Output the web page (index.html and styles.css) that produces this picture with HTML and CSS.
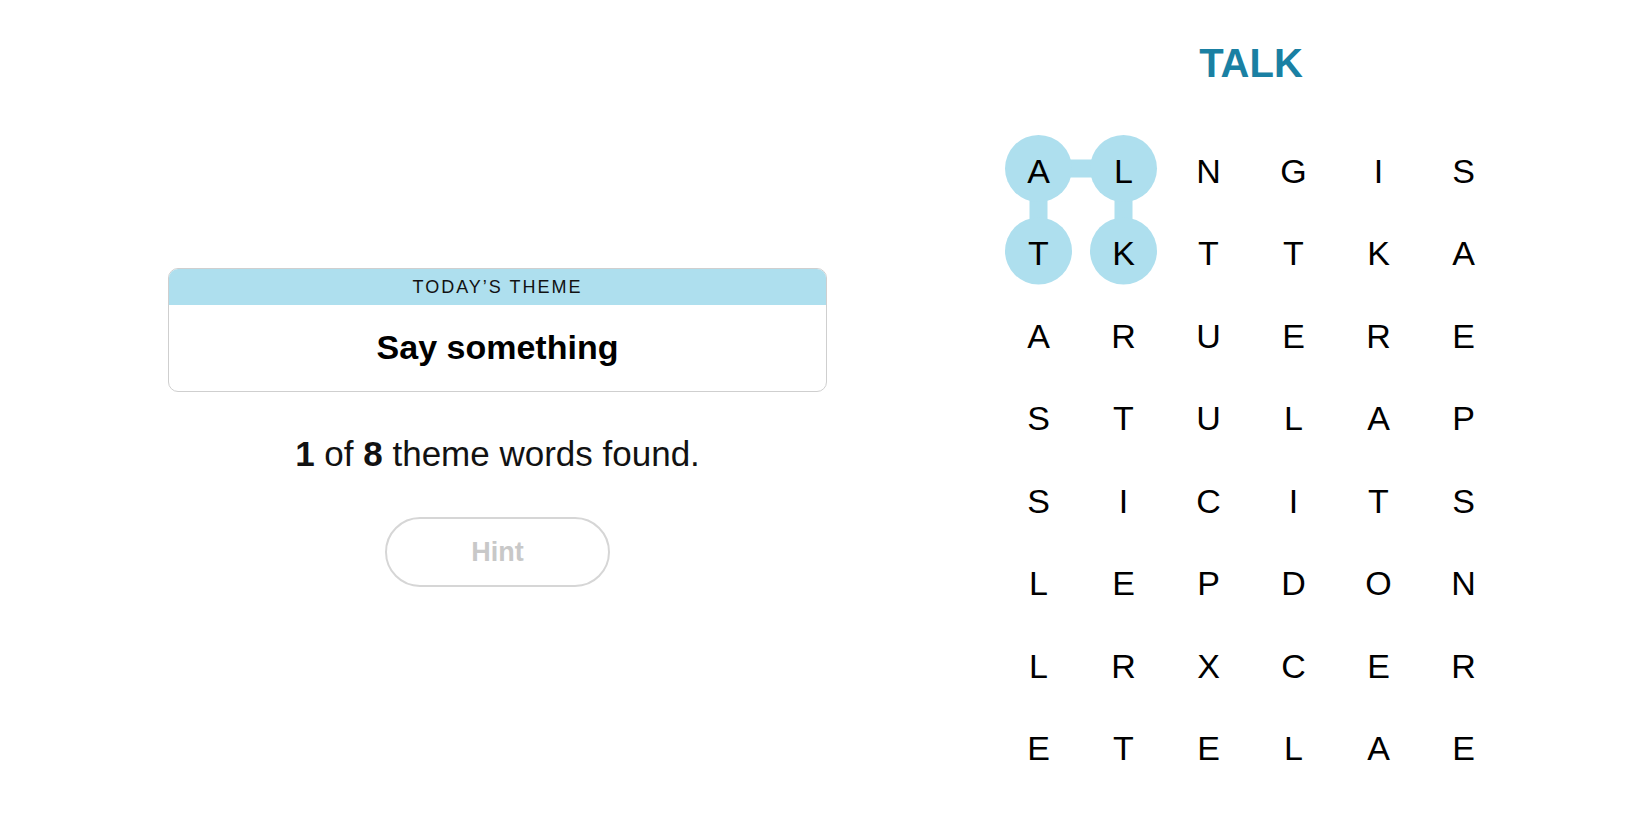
FILE: index.html
```html
<!DOCTYPE html>
<html lang="en">
<head>
<meta charset="utf-8">
<title>Strands</title>
<link rel="stylesheet" href="styles.css">
</head>
<body>
<main class="game">
  <section class="side">
    <div class="theme-card">
      <div class="theme-head">TODAY’S THEME</div>
      <div class="theme-body">Say something</div>
    </div>
    <p class="progress"><b>1</b> of <b>8</b> theme words found.</p>
    <button class="hint" disabled>Hint</button>
  </section>
  <section class="board">
    <h1 class="word">TALK</h1>
    <div class="grid">
      <svg class="trail" width="510" height="660" viewBox="0 0 510 660" aria-hidden="true">
        <g stroke="#aedfee" stroke-width="18" stroke-linecap="butt">
          <line x1="42.5" y1="39.5" x2="127.5" y2="39.5"/>
          <line x1="42.5" y1="39.5" x2="42.5" y2="122"/>
          <line x1="127.5" y1="39.5" x2="127.5" y2="122"/>
        </g>
        <g fill="#aedfee">
          <circle cx="42.5" cy="39.5" r="33.5"/>
          <circle cx="127.5" cy="39.5" r="33.5"/>
          <circle cx="42.5" cy="122" r="33.5"/>
          <circle cx="127.5" cy="122" r="33.5"/>
        </g>
      </svg>
      <span>A</span><span>L</span><span>N</span><span>G</span><span>I</span><span>S</span>
      <span>T</span><span>K</span><span>T</span><span>T</span><span>K</span><span>A</span>
      <span>A</span><span>R</span><span>U</span><span>E</span><span>R</span><span>E</span>
      <span>S</span><span>T</span><span>U</span><span>L</span><span>A</span><span>P</span>
      <span>S</span><span>I</span><span>C</span><span>I</span><span>T</span><span>S</span>
      <span>L</span><span>E</span><span>P</span><span>D</span><span>O</span><span>N</span>
      <span>L</span><span>R</span><span>X</span><span>C</span><span>E</span><span>R</span>
      <span>E</span><span>T</span><span>E</span><span>L</span><span>A</span><span>E</span>
    </div>
  </section>
</main>
</body>
</html>
```

FILE: styles.css
```css
* { box-sizing: border-box; }
html, body {
  margin: 0;
  padding: 0;
  background: #ffffff;
  color: #000000;
  font-family: "Liberation Sans", Arial, sans-serif;
}
.game {
  display: flex;
  align-items: flex-start;
  padding-left: 168px;
  height: 825px;
  overflow: hidden;
}
.side {
  width: 659px;
  padding-top: 268px;
  display: flex;
  flex-direction: column;
  align-items: center;
}
.theme-card {
  width: 659px;
  border: 1px solid #cfcfcf;
  border-radius: 10px;
  overflow: hidden;
}
.theme-head {
  background: #aedfee;
  height: 36px;
  line-height: 37px;
  text-align: center;
  font-size: 18px;
  letter-spacing: 2px;
  color: #121212;
}
.theme-body {
  height: 86px;
  line-height: 84px;
  text-align: center;
  font-size: 34px;
  font-weight: bold;
  color: #000;
}
.progress {
  margin: 43px 0 0;
  font-size: 35px;
  line-height: 38px;
  color: #121212;
}
.hint {
  margin-top: 44px;
  width: 225px;
  height: 70px;
  border: 2px solid #d6d6d6;
  border-radius: 35px;
  background: #fff;
  color: #c8c8c8;
  font-family: "Liberation Sans", Arial, sans-serif;
  font-weight: bold;
  font-size: 27px;
}
.board {
  margin-left: 169px;
  width: 510px;
}
.word {
  margin: 0;
  padding-top: 40px;
  height: 129px;
  line-height: 46px;
  text-align: center;
  font-size: 40px;
  font-weight: bold;
  color: #1a80a3;
}
.grid {
  position: relative;
  display: grid;
  grid-template-columns: repeat(6, 85px);
  grid-template-rows: repeat(8, 82.5px);
}
.trail {
  position: absolute;
  left: 0;
  top: 0;
  z-index: 0;
}
.grid span {
  position: relative;
  z-index: 1;
  display: flex;
  align-items: center;
  justify-content: center;
  font-size: 34px;
  color: #000;
  padding-top: 2px;
}
```
